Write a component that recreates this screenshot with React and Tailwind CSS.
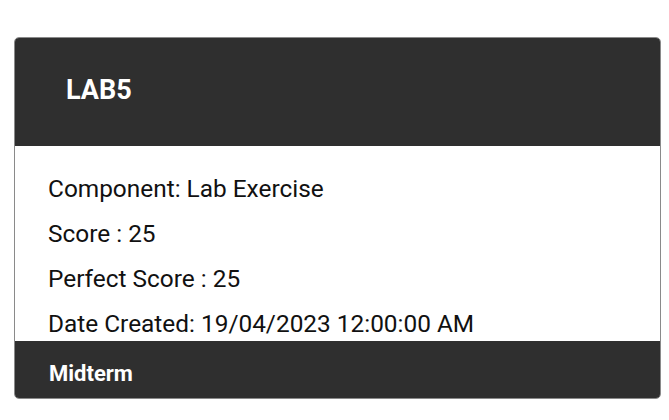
export default function App() {
  const rows = [
    'Component: Lab Exercise',
    'Score : 25',
    'Perfect Score : 25',
    'Date Created: 19/04/2023 12:00:00 AM',
  ]
  return (
    <div className="h-[420px] w-[669px] bg-white pt-[37px] pl-[14px] font-['Roboto',sans-serif]">
      <div className="w-[647px] overflow-hidden rounded-[5px] border border-[#8a8a8a] bg-white">
        <div className="flex h-[108px] items-center bg-[#2f2f2f] pb-[4px] pl-[51px]">
          <h2 className="text-[27px] font-bold text-white">LAB5</h2>
        </div>
        <div className="flex flex-col gap-[21px] px-[33px] pt-[31px] pb-[5px]">
          {rows.map((r) => (
            <p key={r} className="text-[24.4px] leading-[24px] text-[#111]">{r}</p>
          ))}
        </div>
        <div className="flex h-[57px] items-center bg-[#2f2f2f] pt-[7px] pl-[34px]">
          <span className="text-[22px] font-bold text-white">Midterm</span>
        </div>
      </div>
    </div>
  )
}
